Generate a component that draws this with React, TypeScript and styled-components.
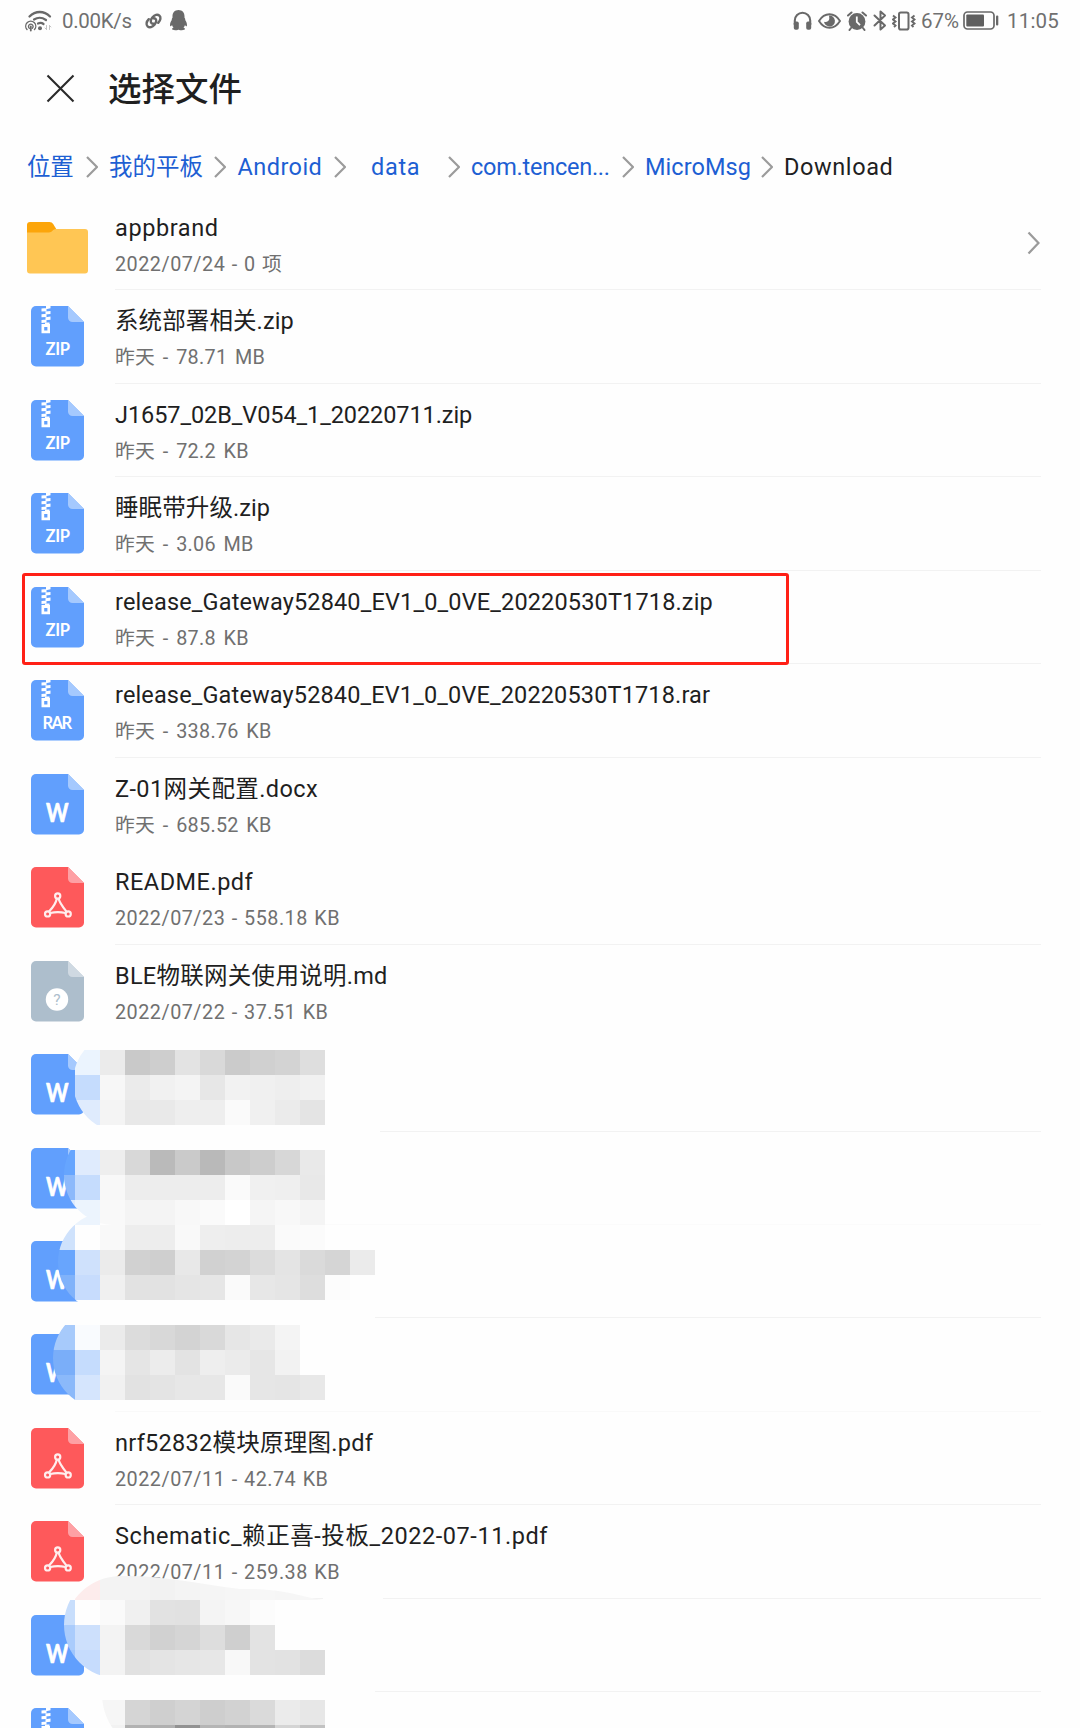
import React from "react";
import styled, { createGlobalStyle } from "styled-components";

const GlobalStyle = createGlobalStyle`
  * { box-sizing: border-box; }
  body {
    margin: 0;
    background: #fefefe;
    font-family: Roboto, "Noto Sans CJK SC", sans-serif;
  }
`;

const Screen = styled.main`
  position: relative;
  width: 1080px;
  height: 1728px;
  overflow: hidden;
  background: #fefefe;
  color: #1f1f1f;
`;

const StatusBar = styled.header`
  display: flex;
  justify-content: space-between;
  height: 41px;
  padding: 0 22px 0 25px;
  color: #707070;
  font-size: 20.5px;
  line-height: 41px;
`;

const StatusGroup = styled.div`
  display: flex;
  align-items: center;

  svg {
    display: block;
    flex: none;
  }
`;

const StatusText = styled.span<{ $width: number; $tracking?: number }>`
  width: ${(p) => p.$width}px;
  padding-top: 1px;
  letter-spacing: ${(p) => p.$tracking ?? 0}px;
  white-space: nowrap;
`;

const Gap = styled.i<{ $w: number }>`
  flex: none;
  width: ${(p) => p.$w}px;
`;

const TitleBar = styled.div`
  display: flex;
  align-items: center;
  gap: 33px;
  height: 94px;
  padding-left: 46px;
`;

const Title = styled.h1`
  margin: 0;
  padding-top: 3px;
  font-size: 33.5px;
  line-height: 48px;
  font-weight: 500;
`;

const Crumbs = styled.nav`
  display: flex;
  align-items: center;
  height: 61px;
  padding: 3px 0 0 27px;
  font-size: 23.5px;
  line-height: 32px;
`;

const Crumb = styled.span<{ $width: number; $current?: boolean; $tracking?: number; $inset?: number }>`
  width: ${(p) => p.$width}px;
  padding-left: ${(p) => p.$inset ?? 0}px;
  letter-spacing: ${(p) => p.$tracking ?? 0}px;
  color: ${(p) => (p.$current ? "#1f1f1f" : "#1d5fd3")};
  white-space: nowrap;
`;

const CrumbArrow = styled.svg`
  flex: none;
  width: 12px;
  height: 22px;
  margin-right: 11.5px;
`;

const List = styled.ul`
  margin: 0;
  padding: 0;
  list-style: none;
`;

const Row = styled.li`
  position: relative;
  display: flex;
  height: 93.46px;
`;

const IconCell = styled.div`
  display: flex;
  flex: none;
  justify-content: center;
  width: 115px;
  padding-top: 17px;

  svg {
    display: block;
  }
`;

const Details = styled.div<{ $line: string }>`
  display: flex;
  flex: none;
  flex-direction: column;
  gap: 9px;
  width: 926px;
  padding-top: 16px;
  box-shadow: 0 1px 0 ${(p) => p.$line};
`;

const Name = styled.div<{ $tracking: number }>`
  height: 32px;
  font-size: 23.5px;
  line-height: 32px;
  letter-spacing: ${(p) => p.$tracking}px;
  white-space: nowrap;
`;

const Meta = styled.div<{ $tracking: number; $gap: number }>`
  height: 24px;
  color: #707070;
  font-size: 19.8px;
  line-height: 24px;
  letter-spacing: ${(p) => p.$tracking}px;
  word-spacing: ${(p) => p.$gap}px;
  white-space: nowrap;
`;

const RowArrow = styled.svg`
  flex: none;
  width: 13px;
  height: 24px;
  margin: 35px 0 0 -14px;
`;

const Highlight = styled.div`
  position: absolute;
  top: 3.5px;
  left: 22px;
  width: 767px;
  height: 92px;
  border: 3px solid #ff2016;
  border-radius: 3px;
`;

const MosaicLayer = styled.svg`
  position: absolute;
  top: 1050px;
  left: 0;
  width: 400px;
  height: 678px;
`;

type Kind = "folder" | "zip" | "rar" | "archive" | "doc" | "pdf" | "unknown";

interface FileItem {
  kind: Kind;
  name?: string;
  meta?: string;
  nameTracking?: number;
  line?: string;
  marked?: boolean;
}

const FILES: FileItem[] = [
  { kind: "folder", name: "appbrand", meta: "2022/07/24 - 0 项", nameTracking: 0.6 },
  { kind: "zip", name: "系统部署相关.zip", meta: "昨天 - 78.71 MB", nameTracking: 0.1 },
  { kind: "zip", name: "J1657_02B_V054_1_20220711.zip", meta: "昨天 - 72.2 KB", nameTracking: -0.08 },
  { kind: "zip", name: "睡眠带升级.zip", meta: "昨天 - 3.06 MB", nameTracking: 0.1 },
  { kind: "zip", name: "release_Gateway52840_EV1_0_0VE_20220530T1718.zip", meta: "昨天 - 87.8 KB", nameTracking: 0.15, marked: true },
  { kind: "rar", name: "release_Gateway52840_EV1_0_0VE_20220530T1718.rar", meta: "昨天 - 338.76 KB", nameTracking: 0.14 },
  { kind: "doc", name: "Z-01网关配置.docx", meta: "昨天 - 685.52 KB", nameTracking: 0.4, line: "transparent" },
  { kind: "pdf", name: "README.pdf", meta: "2022/07/23 - 558.18 KB", nameTracking: 0.5 },
  { kind: "unknown", name: "BLE物联网关使用说明.md", meta: "2022/07/22 - 37.51 KB", nameTracking: 0.28, line: "transparent" },
  { kind: "doc" },
  { kind: "doc", line: "#fbfbfb" },
  { kind: "doc" },
  { kind: "doc", line: "#f9f9f9" },
  { kind: "pdf", name: "nrf52832模块原理图.pdf", meta: "2022/07/11 - 42.74 KB", nameTracking: 0.27 },
  { kind: "pdf", name: "Schematic_赖正喜-投板_2022-07-11.pdf", meta: "2022/07/11 - 259.38 KB", nameTracking: 0.57 },
  { kind: "doc" },
  { kind: "archive", line: "transparent" },
];

const SHEET: Record<string, { body: string; fold: string }> = {
  blue: { body: "#619ffd", fold: "#a5c9fe" },
  red: { body: "#fe595b", fold: "#fea0a4" },
  grey: { body: "#adbecc", fold: "#cfd9e2" },
};

function FolderIcon() {
  return (
    <svg width="61" height="61" viewBox="0 -9 61 61">
      <path d="M0 3a3 3 0 0 1 3-3h19.500q2.500 0 3.700 2l3 5v12H0z" fill="#fca50a" />
      <path d="M0 10.500h22c3 0 4-3.500 7-3.500h29a3 3 0 0 1 3 3v38.500a3 3 0 0 1-3 3H3a3 3 0 0 1-3-3z" fill="#ffc654" />
    </svg>
  );
}

function Zipper() {
  return (
    <g>
      <path
        d="M15 0h4.500v2.200L15 3.200zM10.500 2.600l5-.6v3.200l-5 .4zM14.500 5.500l5-.6v3.200l-5 .4zM10.500 8.300l5-.6v3.200l-5 .4zM14.500 11.200l5-.6v3.200l-5 .4zM10.500 14l5-.6v3.200l-5 .4z"
        fill="#fff"
      />
      <path d="M14 16.500h4.500v2H14z" fill="#fff" />
      <path d="M10.500 18h8.500v9.300h-8.500zM13.200 21v3.500h3.200V21z" fill="#fff" fillRule="evenodd" />
    </g>
  );
}

function PdfMark() {
  return (
    <g fill="none" stroke="#ffeeee" strokeWidth="2.200" strokeLinejoin="round">
      <circle cx="26.700" cy="29" r="2.600" />
      <circle cx="16.600" cy="46.900" r="2.600" />
      <circle cx="37.200" cy="46.900" r="2.600" />
      <path d="M25.800 31.800C25 36 21 41.500 18 44.600M27.700 31.800C28.500 36 33 41.500 35.500 44.600M19.300 46c5-1.300 10-1.300 15.200 0" />
    </g>
  );
}

function SheetIcon({ kind }: { kind: Kind }) {
  const tone = kind === "pdf" ? SHEET.red : kind === "unknown" ? SHEET.grey : SHEET.blue;
  const label = kind === "zip" ? "ZIP" : kind === "rar" ? "RAR" : "";
  return (
    <svg width="53" height="61" viewBox="0 0 53 61">
      <path d="M5 0h32l16 16v39.500a5 5 0 0 1-5 5H5a5 5 0 0 1-5-5V5a5 5 0 0 1 5-5z" fill={tone.body} />
      <path d="M37 0l16 16H41.500a4.500 4.500 0 0 1-4.500-4.500z" fill={tone.fold} />
      {(label || kind === "archive") && <Zipper />}
      {label && (
        <text x={label === "ZIP" ? 14.5 : 11.5} y="48.600" fill="#fff" fontFamily="Lato, Roboto, sans-serif" fontWeight="700" fontSize="16.500" textLength={label === "ZIP" ? 24.5 : 29.5}>
          {label}
        </text>
      )}
      {kind === "doc" && (
        <text x="15" y="48.300" fill="#fff" stroke="#fff" strokeWidth=".7" strokeLinejoin="round" fontFamily="Lato, Roboto, sans-serif" fontWeight="700" fontSize="26" textLength="22.500" lengthAdjust="spacingAndGlyphs">
          W
        </text>
      )}
      {kind === "pdf" && <PdfMark />}
      {kind === "unknown" && (
        <>
          <circle cx="26" cy="38.500" r="11.200" fill="#fff" />
          <text x="26" y="44" fill="#adbecc" fontFamily="Roboto, sans-serif" fontSize="15.500" textAnchor="middle">
            ?
          </text>
        </>
      )}
    </svg>
  );
}

/* Pixelated cover over private file names: 25px tiles, brush-shaped on the left. */
interface Patch {
  cx: number;
  cy: number;
  r: number;
  rows: { y: number; x: number; tiles: string }[];
}

const PATCHES: Patch[] = [
  {
    cx: 123.5, cy: 1082, r: 50.5,
    rows: [
      { y: 1050, x: 75, tiles: "ebf4fe eb c9 ce e3 d9 cb d0 d3 de" },
      { y: 1075, x: 75, tiles: "c5dcfd f7 eb f1 f4 e7 f2 f0 ee f1" },
      { y: 1100, x: 75, tiles: "dfebfd f4 e8 e9 ee ee fa f0 eb e4" },
    ],
  },
  {
    cx: 114, cy: 1175, r: 50,
    rows: [
      { y: 1125, x: 50, tiles: "fe fe fe fe fe fe fe fe fe fe fe fe fe" },
      { y: 1150, x: 50, tiles: "66a5fe dfebfd ee d8 ba ca b9 c8 cd d7 e9" },
      { y: 1175, x: 50, tiles: "8cb9fb c5dcfd f8 ed ed ed ed fa f0 ef e8" },
      { y: 1200, x: 50, tiles: "ddeafd ecf4fd f9 f4 f4 f8 fa ff f5 f8 f4" },
    ],
  },
  {
    cx: 108, cy: 1262, r: 50,
    rows: [
      { y: 1200, x: 75, tiles: "ecf4fd" },
      { y: 1225, x: 50, tiles: "cfe2fc fe f9 ed ed f9 ee ed ed fa fb" },
      { y: 1250, x: 50, tiles: "68a5fd cfe1fc eb d1 cf e8 d1 d3 dc e4 da d5 eb" },
      { y: 1275, x: 50, tiles: "80b2fa c7dcfd f0 e2 e2 e5 e6 fa e7 e5 dd fc" },
      { y: 1300, x: 75, tiles: "fe fe fe fe fe fe fe fe fe fe fe fe" },
    ],
  },
  {
    cx: 104, cy: 1358, r: 51,
    rows: [
      { y: 1325, x: 50, tiles: "a7cafb f9fbfe eb dc d8 d3 d9 e6 ea f4" },
      { y: 1350, x: 50, tiles: "7aaef9 c5dcfd f4 e5 ec e3 ee eb e6 f2" },
      { y: 1375, x: 50, tiles: "8bb9fa d5e5fd f1 e2 e4 e7 e7 fa e6 e5 e8" },
    ],
  },
  {
    cx: 117, cy: 1625, r: 53,
    rows: [
      { y: 1600, x: 50, tiles: "c8defc fe fa f0 e2 e1 f4 f7 fc" },
      { y: 1625, x: 50, tiles: "aaccfc cde0fc f3 d9 d1 d5 dd cf e3" },
      { y: 1650, x: 50, tiles: "a0c6fc c6dcfd f3 e1 e4 e6 e7 f8 e3 e2 dc" },
    ],
  },
  {
    cx: 162, cy: 1694, r: 60,
    rows: [
      { y: 1675, x: 100, tiles: "fe fe fe fe fe fe fe fe fe fe fe" },
      { y: 1700, x: 100, tiles: "f6 d5 cf d4 ce d2 da eb e7" },
      { y: 1725, x: 100, tiles: "f2 b2 b0 92 b5 b2 b4 d4 c2" },
    ],
  },
];

/* Gap between consecutive covers where separators are wiped out. */
const WIPES = [
  { x: 96, y: 1126, width: 284, height: 24 },
  { x: 96, y: 1300, width: 265, height: 25 },
  { x: 323, y: 1590, width: 60, height: 12 },
  { x: 105, y: 1675, width: 265, height: 25 },
];

const tileFill = (code: string) => (code.length === 2 ? `#${code}${code}${code}` : `#${code}`);

function Mosaic() {
  return (
    <MosaicLayer viewBox="0 1050 400 678" shapeRendering="crispEdges">
      <defs>
        {PATCHES.map((p, i) => (
          <clipPath id={`brush${i}`} key={i}>
            <circle cx={p.cx} cy={p.cy} r={p.r} />
            <rect x={p.cx} y={p.rows[0].y} width="300" height="125" />
          </clipPath>
        ))}
        <clipPath id="smear">
          <path d="M70 1606C80 1590 95 1577 120 1576C160 1575 195 1583 240 1589C285 1588 300 1597 323 1600V1606z" />
        </clipPath>
      </defs>
      <g clipPath="url(#smear)">
        {"fdecec f3 f3 f2 f4 f5 f6 f7 f6 f7".split(" ").map((code, i) => (
          <rect key={i} x={75 + i * 25} y="1575" width="25" height="25" fill={tileFill(code)} />
        ))}
      </g>
      {WIPES.map((w) => (
        <rect key={w.y} {...w} fill="#fefefe" />
      ))}
      {PATCHES.map((p, i) => (
        <g key={i} clipPath={`url(#brush${i})`}>
          {p.rows.map((row) =>
            row.tiles.split(" ").map((code, n) => (
              <rect key={`${row.y}-${n}`} x={row.x + n * 25} y={row.y} width="25" height="25" fill={tileFill(code)} />
            )),
          )}
        </g>
      ))}
    </MosaicLayer>
  );
}

function WifiIcon() {
  return (
    <svg width="27" height="22" viewBox="0 0 27 22" fill="none" stroke="#696969" strokeLinecap="round">
      <path d="M4.500 6.500C10.500.500 19 .500 25 6.500" strokeWidth="2.300" />
      <path d="M9 9.500c4-2.500 8-2.300 12 .5M13 13.500c2-.8 4-.6 5.500.5" strokeWidth="2.200" />
      <circle cx="15" cy="18.300" r="2" fill="#696969" stroke="none" />
      <path d="M2 19.500a5 5 0 1 1 7.500 0M4.300 18.200a2.300 2.300 0 1 1 3 0" strokeWidth="1.400" />
      <path d="M5.800 16.500v4" strokeWidth="1.800" />
      <path d="M21.500 15.500v4M20 18l1.500 1.500M24.500 15.500v4M24.500 15.500l1.500 1.500" stroke="#c4c4c4" strokeWidth="1" />
    </svg>
  );
}

function ChainIcon() {
  return (
    <svg width="17" height="16" viewBox="0 0 17 16" fill="none" stroke="#696969" strokeWidth="2.400" strokeLinecap="round">
      <path d="M8.800 10.800C6.800 11 5.600 9.600 5.800 7.800 6 5.800 8.500 2.500 11 1.900c2.800-.6 4.800 1.300 4.400 3.900-.2 1.400-1.100 2.900-2.200 4" />
      <path d="M8.200 5.200c2-.2 3.200 1.200 3 3-.2 2-2.700 5.300-5.200 5.900-2.800.6-4.800-1.300-4.400-3.900.2-1.400 1.100-2.900 2.200-4" />
    </svg>
  );
}

function PenguinIcon() {
  return (
    <svg width="17" height="21" viewBox="0 0 17 21" fill="#696969">
      <path d="M8.500 0c3.900 0 6 2.800 6 6.300v1.500c.6.700.9 1.500.7 2.300 1.400 2 2 4.200 1.700 5.600-.3 1-1.200.4-1.900-.8-.3 1.100-.8 2-1.500 2.700 1 .4 1.500.9 1.500 1.500 0 1.200-4 1.500-6.500.6-2.500.9-6.500.6-6.500-.6 0-.6.500-1.100 1.500-1.500-.7-.7-1.200-1.600-1.500-2.700-.7 1.200-1.600 1.800-1.900.8-.3-1.400.3-3.600 1.700-5.600-.2-.8.1-1.600.7-2.300V6.300c0-3.500 2.100-6.300 6-6.300z" />
    </svg>
  );
}

function HeadphonesIcon() {
  return (
    <svg width="19" height="19" viewBox="0 0 19 19">
      <path d="M1.800 14V9.500a7.700 7.700 0 0 1 15.400 0V14" fill="none" stroke="#696969" strokeWidth="2.100" />
      <rect x=".8" y="10.500" width="5" height="8.300" rx="1.800" fill="#696969" />
      <rect x="13.200" y="10.500" width="5" height="8.300" rx="1.800" fill="#696969" />
    </svg>
  );
}

function EyeIcon() {
  return (
    <svg width="23" height="16" viewBox="0 0 23 16">
      <path d="M1 8C6.500-1 16.500-1 22 8C16.500 17 6.500 17 1 8z" fill="none" stroke="#696969" strokeWidth="1.900" />
      <path d="M11 2.500a5.500 5.500 0 1 1-5 6.300c2.500 1 5.300-.8 5.300-3.300 0-1.200-.3-2.200-.3-3z" fill="#696969" />
    </svg>
  );
}

function AlarmIcon() {
  return (
    <svg width="20" height="20" viewBox="0 0 20 20">
      <circle cx="10" cy="10.500" r="8.400" fill="#696969" />
      <path d="M1 4.500L4.500 1.500M19 4.500L15.500 1.500M4 17l-1.500 2M16 17l1.500 2" stroke="#696969" strokeWidth="2" strokeLinecap="round" />
      <path d="M9.800 5.500v5.500l3.200 3.200" fill="none" stroke="#fefefe" strokeWidth="1.800" />
    </svg>
  );
}

function BluetoothIcon() {
  return (
    <svg width="14" height="21" viewBox="0 0 14 21" fill="none" stroke="#696969" strokeWidth="2" strokeLinejoin="round" strokeLinecap="round">
      <path d="M1.500 5.500l10.500 10L7.500 19.500V1.500L12 5.500l-10.500 10" />
    </svg>
  );
}

function VibrateIcon() {
  return (
    <svg width="24" height="20" viewBox="0 0 24 20" fill="none" stroke="#696969">
      <rect x="7" y="1.500" width="9.500" height="17" rx="1.800" strokeWidth="2" />
      <path d="M1 4.500l2.500 2-2.500 2 2.500 2-2.500 2 2.500 2-1.500 1.500M22.500 4.500l-2.500 2 2.500 2-2.500 2 2.500 2-2.500 2 1.500 1.500" strokeWidth="1.900" />
    </svg>
  );
}

function BatteryIcon() {
  return (
    <svg width="36" height="19" viewBox="0 0 36 19">
      <rect x="1" y="1" width="30" height="17" rx="3.500" fill="none" stroke="#696969" strokeWidth="1.700" />
      <rect x="3.300" y="3.500" width="17.700" height="12" rx="1" fill="#5f5f5f" />
      <rect x="33" y="4.500" width="2.300" height="10" rx="1" fill="#696969" />
    </svg>
  );
}

const Arrow = () => (
  <CrumbArrow viewBox="0 0 12 22">
    <path d="M1 1l10 10L1 21" fill="none" stroke="#9b9b9b" strokeWidth="2.200" />
  </CrumbArrow>
);

const CRUMBS = [
  { text: "位置", width: 58.5, tracking: -0.2 },
  { text: "我的平板", width: 105, tracking: 0 },
  { text: "Android", width: 96, tracking: 0.45 },
  { text: "data", width: 90.5, tracking: 0.7, inset: 14 },
  { text: "com.tencen...", width: 150.5, tracking: -0.25 },
  { text: "MicroMsg", width: 115.5, tracking: 0.05 },
];

export default function App() {
  return (
    <>
      <GlobalStyle />
      <Screen>
        <StatusBar>
          <StatusGroup>
            <WifiIcon />
            <Gap $w={10} />
            <StatusText $width={83} $tracking={-0.3}>0.00K/s</StatusText>
            <ChainIcon />
            <Gap $w={8} />
            <PenguinIcon />
          </StatusGroup>
          <StatusGroup>
            <HeadphonesIcon />
            <Gap $w={6} />
            <EyeIcon />
            <Gap $w={6} />
            <AlarmIcon />
            <Gap $w={6} />
            <BluetoothIcon />
            <Gap $w={5} />
            <VibrateIcon />
            <Gap $w={5} />
            <StatusText $width={42} $tracking={0}>67%</StatusText>
            <BatteryIcon />
            <Gap $w={8} />
            <StatusText $width={51} $tracking={0.2}>11:05</StatusText>
          </StatusGroup>
        </StatusBar>

        <TitleBar>
          <svg width="29" height="29" viewBox="0 0 29 29">
            <path d="M1.500 1.500l26 26M27.500 1.500l-26 26" stroke="#2a2a2a" strokeWidth="2.100" />
          </svg>
          <Title>选择文件</Title>
        </TitleBar>

        <Crumbs>
          {CRUMBS.map((c) => (
            <React.Fragment key={c.text}>
              <Crumb $width={c.width} $tracking={c.tracking} $inset={c.inset}>
                {c.text}
              </Crumb>
              <Arrow />
            </React.Fragment>
          ))}
          <Crumb $width={120} $tracking={0.6} $current>
            Download
          </Crumb>
        </Crumbs>

        <List>
          {FILES.map((f, i) => {
            const recent = f.meta?.startsWith("昨天");
            return (
              <Row key={i}>
                <IconCell>{f.kind === "folder" ? <FolderIcon /> : <SheetIcon kind={f.kind} />}</IconCell>
                <Details $line={f.line ?? "#f2f2f2"}>
                  <Name $tracking={f.nameTracking ?? 0}>{f.name}</Name>
                  <Meta $tracking={recent ? 0.3 : 0.5} $gap={recent ? 2.4 : 1}>
                    {f.meta}
                  </Meta>
                </Details>
                {f.kind === "folder" && (
                  <RowArrow viewBox="0 0 13 24">
                    <path d="M1.500 1.500l10 10.500-10 10.500" fill="none" stroke="#9b9b9b" strokeWidth="2.300" />
                  </RowArrow>
                )}
                {f.marked && <Highlight />}
              </Row>
            );
          })}
        </List>
        <Mosaic />
      </Screen>
    </>
  );
}
